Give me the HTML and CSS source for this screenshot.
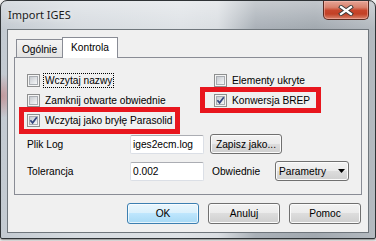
FILE: index.html
```html
<!DOCTYPE html>
<html>
<head>
<meta charset="utf-8">
<link rel="stylesheet" href="styles.css">
</head>
<body>
<div class="window">
  <div class="titlebar">
    <span class="title">Import IGES</span>
    <div class="close">
      <svg width="16" height="11" viewBox="0 0 16 11">
        <path d="M3 2 L13 9 M13 2 L3 9" stroke="#3a3a3a" stroke-width="4" stroke-linecap="square"/>
        <path d="M3 2 L13 9 M13 2 L3 9" stroke="#ffffff" stroke-width="2.2" stroke-linecap="square"/>
      </svg>
    </div>
  </div>
  <div class="client">
    <div class="tabs">
      <div class="tab">Ogólnie</div>
      <div class="tab active">Kontrola</div>
    </div>
    <div class="panel">
      <div class="checks">
        <div class="check"><span class="cb"><span class="cb-in"></span></span><span class="lbl focus">Wczytaj nazwy</span></div>
        <div class="check right"><span class="cb"><span class="cb-in"></span></span><span class="lbl">Elementy ukryte</span></div>
        <div class="check"><span class="cb"><span class="cb-in"></span></span><span class="lbl">Zamknij otwarte obwiednie</span></div>
        <div class="check right"><span class="cb"><span class="cb-in"></span><svg class="tick" width="13" height="13" viewBox="0 0 13 13"><path d="M3.4 6.3 L5.6 8.8 L9.8 3.2" stroke="#33467f" stroke-width="1.7" fill="none"/></svg></span><span class="lbl">Konwersja BREP</span></div>
        <div class="check"><span class="cb"><span class="cb-in"></span><svg class="tick" width="13" height="13" viewBox="0 0 13 13"><path d="M3.4 6.3 L5.6 8.8 L9.8 3.2" stroke="#33467f" stroke-width="1.7" fill="none"/></svg></span><span class="lbl">Wczytaj jako bryłę Parasolid</span></div>
      </div>
      <div class="form-row">
        <span class="flabel">Plik Log</span>
        <div class="field">iges2ecm.log</div>
        <div class="btn small save">Zapisz jako...</div>
      </div>
      <div class="form-row">
        <span class="flabel">Tolerancja</span>
        <div class="field">0.002</div>
        <span class="flabel2">Obwiednie</span>
        <div class="btn small combo"><span class="combo-text">Parametry obwiedni</span><svg class="arrow" width="7" height="4" viewBox="0 0 7 4"><polygon points="0,0 7,0 3.5,4" fill="#000"/></svg></div>
      </div>
      <div class="mark mark1"></div>
      <div class="mark mark2"></div>
    </div>
    <div class="buttons">
      <div class="btn default">OK</div>
      <div class="btn">Anuluj</div>
      <div class="btn">Pomoc</div>
    </div>
  </div>
</div>
</body>
</html>
```
FILE: styles.css
```css
html, body {
  margin: 0;
  padding: 0;
}
body {
  width: 376px;
  height: 241px;
  overflow: hidden;
  background: #f2f2f2;
  font-family: "Liberation Sans", Arial, sans-serif;
  font-size: 10.2px;
  color: #000;
}
.window {
  box-sizing: border-box;
  width: 376px;
  height: 239px;
  border: 1px solid #2f3336;
  border-radius: 7px 7px 2px 2px;
  padding: 0 6px 5px 6px;
  display: flex;
  flex-direction: column;
  box-shadow: 0 1px 2px rgba(0,0,0,0.45);
  background:
    radial-gradient(circle at 0 95px, rgba(190,110,110,0.55), rgba(190,110,110,0) 22px),
    linear-gradient(to bottom, rgba(255,255,255,0.35), rgba(255,255,255,0) 28px),
    linear-gradient(90deg, #c3cad1 0%, #d6dbe0 20%, #dee2e6 48%, #dadee2 58%, #aab1b8 68%, #a2a9b0 84%, #b4bac0 100%);
}
.titlebar {
  height: 28px;
  display: flex;
  align-items: flex-start;
  flex-shrink: 0;
}
.title {
  font-family: "Noto Sans", "Open Sans", sans-serif;
  font-size: 11px;
  line-height: 16px;
  margin: 6px 0 0 1px;
  color: #1a1a1a;
  text-shadow: 0 0 6px rgba(255,255,255,0.9);
}
.close {
  margin-left: auto;
  box-sizing: border-box;
  width: 46px;
  height: 19px;
  border: 1px solid #5a2a20;
  border-top: none;
  border-radius: 0 0 5px 5px;
  background: linear-gradient(#e6a596 0%, #d9826d 35%, #c8462c 52%, #c24025 72%, #d9846d 100%);
  box-shadow: inset 0 0 0 1px rgba(255,200,190,0.45);
  display: flex;
  align-items: center;
  justify-content: center;
}
.client {
  box-sizing: border-box;
  height: 204px;
  border: 1px solid #6f767c;
  background: #f0f0f0;
  padding: 7px 6px 0 6px;
  display: flex;
  flex-direction: column;
}
.tabs {
  height: 20px;
  display: flex;
  align-items: flex-end;
  flex-shrink: 0;
  position: relative;
  z-index: 2;
}
.tab {
  box-sizing: border-box;
  height: 18px;
  width: 47px;
  margin-left: 2px;
  border: 1px solid #898c95;
  border-bottom: none;
  background: linear-gradient(#f3f3f3, #e3e3e3);
  display: flex;
  align-items: center;
  justify-content: center;
  padding-top: 1px;
}
.tab.active {
  height: 21px;
  width: 56px;
  margin-left: -1px;
  margin-bottom: -1px;
  background: #ffffff;
  padding-top: 0;
  padding-bottom: 2px;
}
.panel {
  position: relative;
  box-sizing: border-box;
  height: 138px;
  border: 1px solid #898c95;
  background: #f0f0f0;
  padding: 12px 0 0 12px;
  display: flex;
  flex-direction: column;
}
.checks {
  display: grid;
  grid-template-columns: 187px auto;
  grid-template-rows: 20px 20px 21px;
}
.check {
  display: flex;
  align-items: center;
}
.cb {
  position: relative;
  box-sizing: border-box;
  width: 13px;
  height: 13px;
  border: 1px solid #8e8f8f;
  background: #f4f4f4;
  padding: 1px;
  margin-right: 3px;
  flex-shrink: 0;
}
.cb-in {
  display: block;
  box-sizing: border-box;
  width: 9px;
  height: 9px;
  border: 1px solid #a9adb2;
  background: linear-gradient(135deg, #c8ccd1, #eceef0 80%, #f8f8f8);
}
.tick {
  position: absolute;
  left: -1px;
  top: -1px;
}
.lbl {
  border: 1px solid transparent;
  padding: 0 1px;
  line-height: 13px;
}
.lbl.focus {
  border: 1px dotted #000;
}
.form-row {
  display: flex;
  align-items: center;
  height: 20px;
  margin-top: 3px;
}
.form-row + .form-row {
  margin-top: 7px;
}
.flabel {
  width: 103px;
  flex-shrink: 0;
}
.flabel2 {
  width: 63px;
  margin-left: 8px;
  flex-shrink: 0;
}
.field {
  box-sizing: border-box;
  width: 74px;
  height: 19px;
  border: 1px solid #dbdfe6;
  border-top-color: #abadb3;
  border-radius: 2px;
  background: #fff;
  padding: 0 2px;
  display: flex;
  align-items: center;
  white-space: nowrap;
  overflow: hidden;
}
.btn {
  box-sizing: border-box;
  width: 72px;
  height: 21px;
  border: 1px solid #707070;
  border-radius: 3px;
  background: linear-gradient(#f2f2f2 0%, #ebebeb 50%, #dddddd 50%, #cfcfcf 100%);
  box-shadow: inset 0 0 0 1px #fbfbfb;
  display: flex;
  align-items: center;
  justify-content: center;
  white-space: nowrap;
}
.btn.small {
  height: 20px;
}
.save {
  margin-left: 6px;
}
.combo {
  width: 74px;
  justify-content: flex-start;
  padding-left: 3px;
}
.combo-text {
  width: 49px;
  overflow: hidden;
  white-space: nowrap;
}
.arrow {
  margin-left: 10px;
}
.btn.default {
  border-color: #3c7fb1;
  background: linear-gradient(#eaf6fd 0%, #d9f0fc 50%, #bee6fd 50%, #a7d9f5 100%);
  box-shadow: inset 0 0 0 1px rgba(255,255,255,0.7);
}
.buttons {
  display: flex;
  justify-content: flex-end;
  gap: 9px;
  margin-top: 8px;
  padding-right: 1px;
}
.mark {
  position: absolute;
  box-sizing: border-box;
  border: 5px solid #e8161e;
}
.mark1 {
  left: 4px;
  top: 49px;
  width: 161px;
  height: 27px;
}
.mark2 {
  left: 185px;
  top: 29px;
  width: 121px;
  height: 26px;
}
```
